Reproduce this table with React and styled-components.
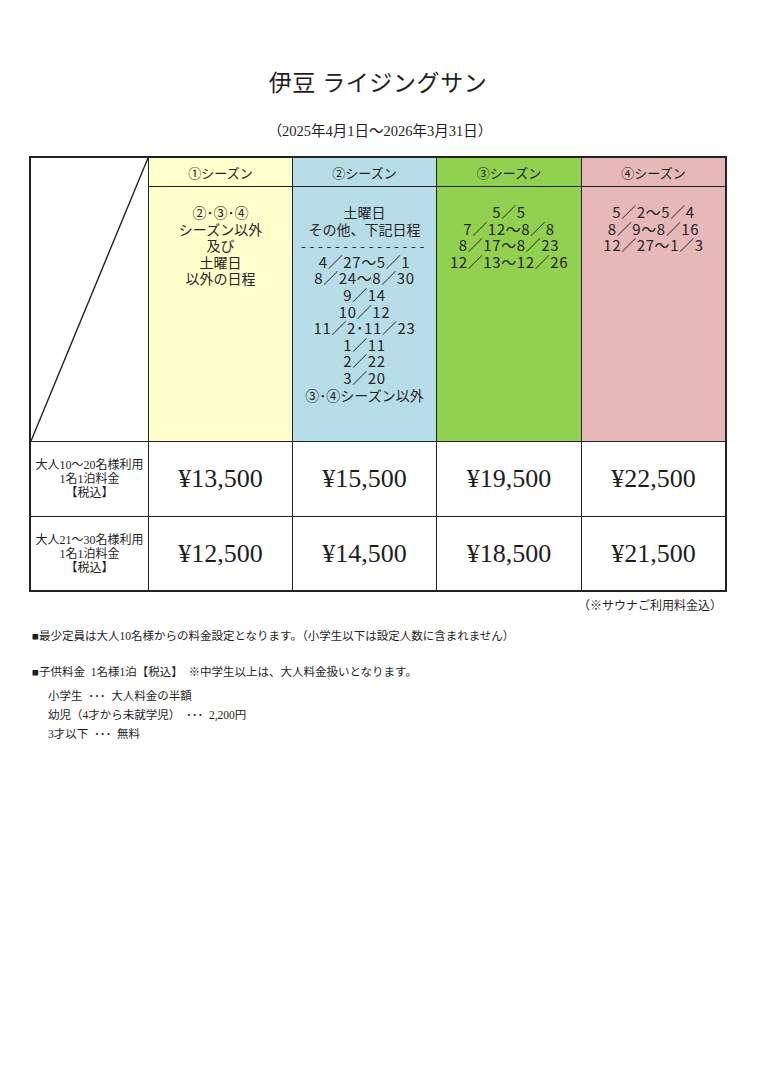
import React from 'react';
import styled, {createGlobalStyle} from 'styled-components';

const GlobalStyle = createGlobalStyle`
    body {
        margin: 0;
        background: #ffffff;
        color: #1e1e1e;
        font-family: "Liberation Serif", "Noto Sans CJK JP", serif;
    }
`;

const seasons = [
    {
        title: '①シーズン',
        bg: '#ffffcc',
        lines: [
            {text: '②･③･④'},
            {text: 'シーズン以外'},
            {text: '及び'},
            {text: '土曜日'},
            {text: '以外の日程'},
        ],
        prices: ['¥13,500', '¥12,500'],
    },
    {
        title: '②シーズン',
        bg: '#b7dde9',
        lines: [
            {text: '土曜日'},
            {text: 'その他、下記日程'},
            {text: '---------------', dash: true},
            {text: '4／27～5／1', date: true},
            {text: '8／24～8／30', date: true},
            {text: '9／14', date: true},
            {text: '10／12', date: true},
            {text: '11／2･11／23', date: true},
            {text: '1／11', date: true},
            {text: '2／22', date: true},
            {text: '3／20', date: true},
            {text: '③･④シーズン以外'},
        ],
        prices: ['¥15,500', '¥14,500'],
    },
    {
        title: '③シーズン',
        bg: '#92d050',
        lines: [
            {text: '5／5', date: true},
            {text: '7／12～8／8', date: true},
            {text: '8／17～8／23', date: true},
            {text: '12／13～12／26', date: true},
        ],
        prices: ['¥19,500', '¥18,500'],
    },
    {
        title: '④シーズン',
        bg: '#e6b8b8',
        lines: [
            {text: '5／2～5／4', date: true},
            {text: '8／9～8／16', date: true},
            {text: '12／27～1／3', date: true},
        ],
        prices: ['¥22,500', '¥21,500'],
    },
];

const rowLabels = [
    ['大人10～20名様利用', '1名1泊料金', '【税込】'],
    ['大人21～30名様利用', '1名1泊料金', '【税込】'],
];

const App = () => {
    return (
        <Page>
            <GlobalStyle />
            <Title>伊豆 ライジングサン</Title>
            <Period>（2025年4月1日～2026年3月31日）</Period>

            <PriceTable>
                <CornerCell>
                    <svg width="100%" height="100%" viewBox="0 0 100 100" preserveAspectRatio="none">
                        <line x1="100" y1="0" x2="0" y2="100" stroke="#222" strokeWidth="1.4" vectorEffect="non-scaling-stroke" />
                    </svg>
                </CornerCell>
                {seasons.map((s) => (
                    <HeaderCell key={s.title} $bg={s.bg}>{s.title}</HeaderCell>
                ))}
                {seasons.map((s) => (
                    <SeasonCell key={`body-${s.title}`} $bg={s.bg}>
                        {s.lines.map((l, i) => (
                            <SeasonLine key={i} $date={l.date} $dash={l.dash}>{l.text}</SeasonLine>
                        ))}
                    </SeasonCell>
                ))}
                {rowLabels.map((label, r) => (
                    <React.Fragment key={`row-${r}`}>
                        <LabelCell>
                            {label.map((t) => <div key={t}>{t}</div>)}
                        </LabelCell>
                        {seasons.map((s) => (
                            <PriceCell key={`${r}-${s.title}`}>{s.prices[r]}</PriceCell>
                        ))}
                    </React.Fragment>
                ))}
            </PriceTable>

            <SaunaNote>（※サウナご利用料金込）</SaunaNote>

            <Notes>
                <Note>■最少定員は大人10名様からの料金設定となります。（小学生以下は設定人数に含まれません）</Note>
                <Note $gap>■子供料金&nbsp;&nbsp;1名様1泊【税込】&nbsp;&nbsp;※中学生以上は、大人料金扱いとなります。</Note>
                <ChildList>
                    <ChildRow>小学生&nbsp;&nbsp;･･･&nbsp;&nbsp;大人料金の半額</ChildRow>
                    <ChildRow>幼児（4才から未就学児）&nbsp;&nbsp;･･･&nbsp;&nbsp;2,200円</ChildRow>
                    <ChildRow>3才以下&nbsp;&nbsp;･･･&nbsp;&nbsp;無料</ChildRow>
                </ChildList>
            </Notes>
        </Page>
    );
};

const Page = styled.div`
    width: 760px;
    min-height: 1074px;
    padding-top: 69px;
    box-sizing: border-box;
`;

const Title = styled.h1`
    margin: 0;
    text-align: center;
    font-size: 23px;
    font-weight: normal;
    line-height: 30px;
    letter-spacing: 0.6px;
    padding-right: 4px;
`;

const Period = styled.div`
    margin-top: 23px;
    text-align: center;
    font-size: 14.5px;
    line-height: 18px;
`;

const PriceTable = styled.div`
    display: grid;
    grid-template-columns: 117px 143px 143px 144px 143px;
    grid-template-rows: 28px 254px 74px 73px;
    gap: 1px;
    width: 698px;
    margin: 16px 0 0 29px;
    box-sizing: border-box;
    border: 2px solid #222;
    background: #222;
`;

const CornerCell = styled.div`
    grid-row: span 2;
    background: #ffffff;

    svg {
        display: block;
    }
`;

const HeaderCell = styled.div`
    display: flex;
    align-items: center;
    justify-content: center;
    background: ${(p) => p.$bg};
    font-family: "Noto Sans CJK JP", sans-serif;
    font-size: 13px;
    color: #222;
`;

const SeasonCell = styled.div`
    background: ${(p) => p.$bg};
    padding-top: 17px;
    text-align: center;
    font-family: "Noto Sans CJK JP", sans-serif;
    font-size: 14px;
    line-height: 16.6px;
    color: #262626;
`;

const SeasonLine = styled.div`
    white-space: nowrap;
    height: 16.6px;
    font-size: ${(p) => (p.$date ? '15px' : '14px')};
    letter-spacing: ${(p) => (p.$date ? '0.6px' : p.$dash ? '3.6px' : '0')};
`;

const LabelCell = styled.div`
    display: flex;
    flex-direction: column;
    align-items: center;
    justify-content: center;
    background: #ffffff;
    font-size: 12px;
    line-height: 14px;
    white-space: nowrap;
`;

const PriceCell = styled.div`
    display: flex;
    align-items: center;
    justify-content: center;
    background: #ffffff;
    font-size: 26px;
`;

const SaunaNote = styled.div`
    width: 698px;
    margin: 6px 0 0 29px;
    padding-right: 5px;
    box-sizing: border-box;
    text-align: right;
    font-size: 12px;
    line-height: 16px;
`;

const Notes = styled.div`
    margin: 14px 0 0 32px;
    font-size: 11.5px;
`;

const Note = styled.div`
    line-height: 16px;
    margin-top: ${(p) => (p.$gap ? '20px' : '0')};
`;

const ChildList = styled.div`
    margin: 7px 0 0 16px;
    line-height: 19px;
`;

const ChildRow = styled.div``;

export default App;
